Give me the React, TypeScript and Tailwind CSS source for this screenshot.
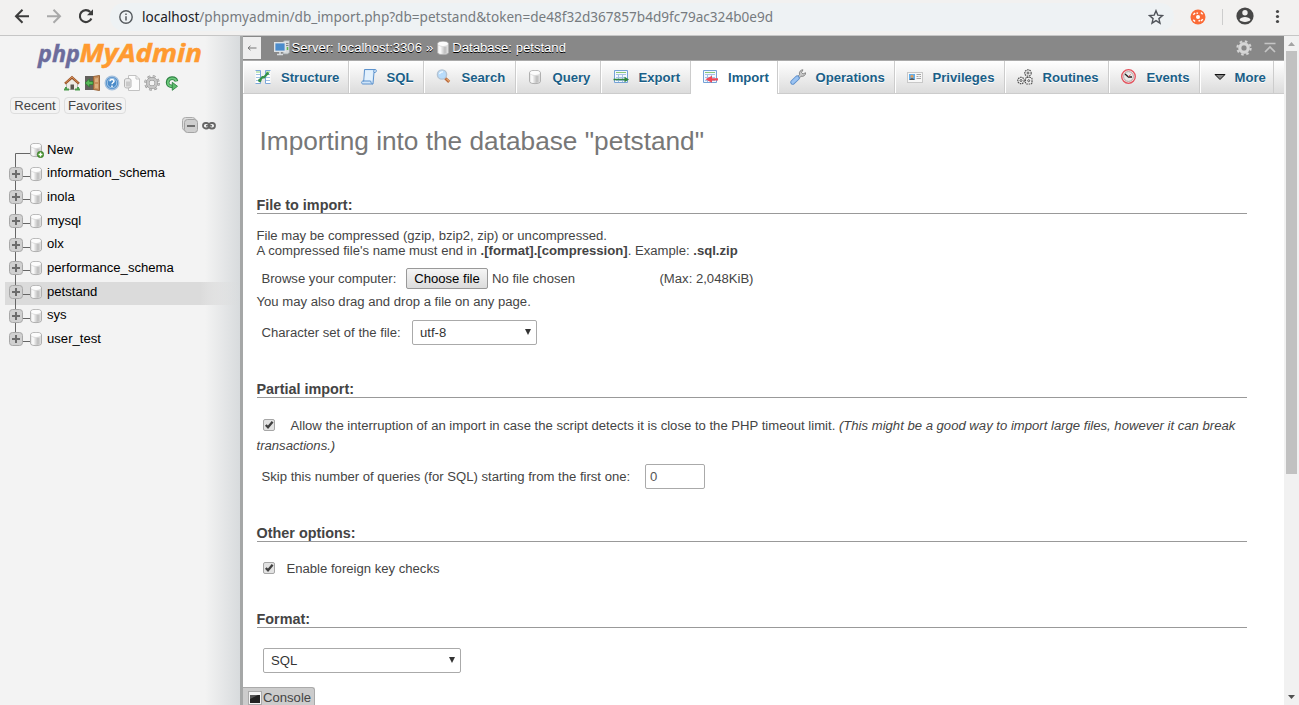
import type { ReactNode } from "react";

const tree = [
  { name: "New", cls: "h-[24px]", lh: "leading-[19px]" },
  { name: "information_schema", cls: "h-[23px]", lh: "leading-[17px]" },
  { name: "inola", cls: "h-[24px]", lh: "leading-[19px]" },
  { name: "mysql", cls: "h-[24px]", lh: "leading-[19px]" },
  { name: "olx", cls: "h-[23px]", lh: "leading-[17px]" },
  { name: "performance_schema", cls: "h-[24px]", lh: "leading-[19px]" },
  { name: "petstand", cls: "h-[24px]", lh: "leading-[19px]" },
  { name: "sys", cls: "h-[23px]", lh: "leading-[17px]" },
  { name: "user_test", cls: "h-[24px]", lh: "leading-[19px]" },
];

function Cylinder({ plus = false, className = "" }: { plus?: boolean; className?: string }) {
  return (
    <svg width="16" height="16" viewBox="0 0 16 16" className={"shrink-0 " + className}>
      <path d="M2.500 3.500C2.500 .8 13.500 .8 13.500 3.500V12.500C13.500 15.300 2.500 15.300 2.500 12.500Z" fill="#dcdcdc" stroke="#b0b0b0" />
      <path d="M3.500 5.500C5 6.500 6 6.700 6.500 6.700V14C5 14 3.500 13 3.500 12.500Z" fill="#f8f8f8" />
      <path d="M8.500 6.700H11.500V13.300L8.500 13.900Z" fill="#c2c2c2" />
      <ellipse cx="8" cy="3.800" rx="4.900" ry="2.100" fill="#fcfcfc" />
      {plus && (
        <g>
          <circle cx="12.500" cy="12.500" r="3.200" fill="#4c9a32" stroke="#2f6d1e" strokeWidth=".6" />
          <path d="M12.500 10.600v3.800M10.600 12.500h3.800" stroke="#fff" strokeWidth="1.300" />
        </g>
      )}
    </svg>
  );
}

function Branch({ first, last }: { first: boolean; last: boolean }) {
  return (
    <svg width="25" height="24" viewBox="0 0 25 24" className="shrink-0 overflow-visible">
      {first ? (
        <path d="M25 13.500H10.500V25" fill="none" stroke="#666" />
      ) : (
        <g>
          <path d={last ? "M10.500 0V8" : "M10.500 0V24"} stroke="#666" />
          <path d="M17 12.500H25" stroke="#666" />
          <rect x="4.500" y="3.500" width="13" height="13" rx="3" fill="#d0d0d0" stroke="#a8a8a8" />
          <path d="M11 6v8M7 10h8" stroke="#6c6c6c" strokeWidth="2" />
        </g>
      )}
    </svg>
  );
}

function Gear({ body = "#c6c6c6", edge = "#8b8b8b", hole = "#f3f3f3" }) {
  return (
    <svg width="16" height="16" viewBox="0 0 16 16" className="shrink-0">
      <circle cx="8" cy="8" r="6.300" fill="none" stroke={edge} strokeWidth="3" strokeDasharray="2.500 2.448" />
      <circle cx="8" cy="8" r="6.100" fill="none" stroke={body} strokeWidth="2.400" strokeDasharray="2 2.791" strokeDashoffset="-.25" />
      <circle cx="8" cy="8" r="4.200" fill="none" stroke={edge} strokeWidth="3.400" />
      <circle cx="8" cy="8" r="4.200" fill="none" stroke={body} strokeWidth="2.600" />
      <circle cx="8" cy="8" r="2.100" fill={hole} />
    </svg>
  );
}

function Svg16({ children }: { children: ReactNode }) {
  return (
    <svg width="16" height="16" viewBox="0 0 16 16" className="shrink-0" fill="none">
      {children}
    </svg>
  );
}

const StructureIcon = (
  <Svg16>
    <path d="M.5 1.500h5v13h-5M15.500 1.500h-5v13h5" fill="#fff" stroke="#7ba7da" />
    <path d="M1 5.500h4M1 8.500h4M1 11.500h4M11 5.500h4M11 8.500h4M11 11.500h4" stroke="#9fc0e4" />
    <path d="M1 3h4M11 3h4" stroke="#8ccf78" />
    <path d="M4.500 11.500L7.500 8L9 8.500L12.500 4.500" stroke="#34924a" strokeWidth="2.200" strokeLinejoin="round" />
    <circle cx="4.800" cy="11.500" r="1.700" fill="#34924a" />
    <circle cx="12.500" cy="4.500" r="1.500" fill="#34924a" />
  </Svg16>
);
const SqlIcon = (
  <Svg16>
    <path d="M3.500 .5H14.500C15.800 .5 15.500 3.500 14 3.500H13L12 15H2C0 15 .3 12 2 12H2.800Z" fill="#cfe4f8" stroke="#5c92cd" />
    <path d="M4.300 1.500H12L11.200 11.500H3.500Z" fill="#e3f1fd" />
    <path d="M2 12H9.500C10 13 10 14.500 11.500 15M13 3.500C12.500 2.500 12.500 1.500 13.500 .8" stroke="#5c92cd" />
  </Svg16>
);
const SearchIcon = (
  <Svg16>
    <path d="M9 9L13.200 12.800" stroke="#b9683a" strokeWidth="3" />
    <path d="M10.500 9.800L13.500 12.500" stroke="#e5a46c" strokeWidth="1.300" />
    <circle cx="6" cy="5.500" r="4.600" fill="#b8dcfb" stroke="#b3c3d3" strokeWidth="1.400" />
    <path d="M3.500 5A3 3 0 0 1 7 3" stroke="#f2faff" strokeWidth="1.300" />
  </Svg16>
);
function SheetIcon({ kind }: { kind: "export" | "import" }) {
  return (
    <Svg16>
      <path d="M1.500 1.500h13v12h-13z" fill="#f3f8ff" stroke="#75a2d6" />
      <path d="M3 3.500h10" stroke="#8bc878" />
      <path d="M3 5.500h10M3 8.500h10M3 11.500h10M5.500 5v8M9.500 5v8" stroke="#a6c2e6" />
      {kind === "export" ? (
        <path d="M.5 9.700h11V7.800L16 10.500l-4.500 2.700v-1.900H.5z" fill="#2f8540" />
      ) : (
        <path d="M16 9.300h-6V6.800L3.500 10.300l6.500 3.500v-2.200h6z" fill="#f04858" />
      )}
    </Svg16>
  );
}
const WrenchIcon = (
  <Svg16>
    <path d="M7 8.500L9.500 5.500C8.800 3 10.500 .8 13 .8L11.500 3.500L13 5L15.600 3.700C16 6 13.500 8 11 7.200L8.500 10Z" fill="#c8c8c8" stroke="#777" strokeWidth=".8" />
    <path d="M2.800 13.200L7.200 9" stroke="#5c8fcb" strokeWidth="5" strokeLinecap="round" />
    <path d="M2.800 13.200L7.200 9" stroke="#9bc3f2" strokeWidth="3.200" strokeLinecap="round" />
  </Svg16>
);
const PrivIcon = (
  <Svg16>
    <rect x=".5" y="3.500" width="15" height="10" fill="#f7f7f7" stroke="#c8c8c8" />
    <rect x="2" y="5" width="6" height="6" fill="#62aeea" />
    <circle cx="5" cy="7.200" r="1.500" fill="#e2a05f" />
    <path d="M2.500 11c.5-2.300 4.500-2.300 5 0z" fill="#555" />
    <path d="M9.500 5.500h4.500M9.500 7.500h2M12.500 7.500h1.500M9.500 9.500h4.500" stroke="#a5a5a5" />
  </Svg16>
);
const RoutinesIcon = (
  <Svg16>
    <g fill="#f1f1f1" stroke="#555" strokeWidth="1.200" strokeDasharray="1.600 .7">
      <circle cx="11" cy="4" r="3.200" />
      <circle cx="4" cy="11.500" r="3.200" />
      <rect x="8.500" y="8.500" width="6.500" height="6.500" rx="1.500" />
    </g>
    <g fill="#fff" stroke="#555">
      <circle cx="11" cy="4" r="1" />
      <circle cx="4" cy="11.500" r="1" />
      <circle cx="11.700" cy="11.700" r="1" />
    </g>
  </Svg16>
);
const EventsIcon = (
  <Svg16>
    <circle cx="7.500" cy="7.500" r="6.800" fill="#f2e4e2" stroke="#e3525d" strokeWidth="1.300" />
    <circle cx="7.500" cy="7.500" r="4.900" fill="#e9e9e9" stroke="#b0a0a0" strokeWidth=".9" />
    <path d="M4 5L7.500 8H11" stroke="#222" strokeWidth="1.300" />
    <path d="M7.500 8L9.500 5.500" stroke="#e14b57" />
  </Svg16>
);
const MoreIcon = (
  <Svg16>
    <path d="M3 5.500H13L8 10.500Z" fill="#888" stroke="#111" strokeWidth="1" />
  </Svg16>
);

const tabs = [
  { label: "Structure", icon: StructureIcon, w: "w-[106px]", gap: "ml-[10px]" },
  { label: "SQL", icon: SqlIcon, w: "w-[75px]", gap: "ml-[10px]" },
  { label: "Search", icon: SearchIcon, w: "w-[92px]", gap: "ml-[10px]" },
  { label: "Query", icon: <Cylinder className="-ml-px" />, w: "w-[85px]", gap: "ml-[10px]" },
  { label: "Export", icon: <SheetIcon kind="export" />, w: "w-[90px]", gap: "ml-[10px]" },
  { label: "Import", icon: <SheetIcon kind="import" />, w: "w-[87px]", gap: "ml-[10px]" },
  { label: "Operations", icon: WrenchIcon, w: "w-[117px]", gap: "ml-[10px]" },
  { label: "Privileges", icon: PrivIcon, w: "w-[110px]", gap: "ml-[10px]" },
  { label: "Routines", icon: RoutinesIcon, w: "w-[104px]", gap: "ml-[10px]" },
  { label: "Events", icon: EventsIcon, w: "w-[91px]", gap: "ml-[10px]" },
  { label: "More", icon: MoreIcon, w: "w-[74px]", gap: "ml-[7px]" },
];

function BrowserBar() {
  return (
    <header className="flex h-9 shrink-0 items-start border-b border-[#c6c6c6] bg-[#f2f1f0]">
      <svg width="110" height="34" viewBox="0 0 110 34" fill="none" className="shrink-0">
        <path d="M29 16.200H16.500M22.500 9.700L16 16.200L22.500 22.700" stroke="#3c3c3c" strokeWidth="2" />
        <path d="M47 16.200H59.500M53.500 9.700L60 16.200L53.500 22.700" stroke="#a9a9a9" strokeWidth="2" />
        <path d="M91.400 18.500A6 6 0 1 1 90.300 12" stroke="#3c3c3c" strokeWidth="2.100" />
        <path d="M93 9.200V15.200H87Z" fill="#3c3c3c" />
      </svg>
      <div className="mt-[3px] flex h-[28px] w-[1064px] items-center rounded-full bg-[#eef2f4] pl-[9px] pr-[10px]">
        <svg width="14" height="14" viewBox="0 0 14 14" fill="none" className="shrink-0">
          <circle cx="7" cy="7" r="6.200" stroke="#555a5e" strokeWidth="1.400" />
          <path d="M7 6.200V10.500M7 3.500V5" stroke="#555a5e" strokeWidth="1.500" />
        </svg>
        <div className="ml-[9px] flex-1">
          <svg width="640" height="28" viewBox="0 0 640 28" className="block overflow-visible">
            <text x="0" y="18.500" textLength="631" lengthAdjust="spacingAndGlyphs" className="fill-[#767b7f] font-['Noto_Sans',sans-serif] text-[14.500px]">
              <tspan className="fill-[#202124]">localhost</tspan>/phpmyadmin/db_import.php?db=petstand&amp;token=de48f32d367857b4d9fc79ac324b0e9d
            </text>
          </svg>
        </div>
        <svg width="16" height="16" viewBox="0 0 16 16" fill="none" className="shrink-0">
          <path d="M8 1.700L9.800 6.100L14.500 6.500L10.900 9.600L12 14.200L8 11.700L4 14.200L5.100 9.600L1.500 6.500L6.200 6.100Z" stroke="#50545a" strokeWidth="1.400" />
        </svg>
      </div>
      <svg width="125" height="34" viewBox="0 0 125 34" fill="none" className="shrink-0">
        <circle cx="24" cy="17" r="7.500" fill="#fb6b37" />
        <circle cx="24" cy="17" r="2" fill="#fff" />
        <path d="M19.300 14.800l1.800-1.900M26.900 12.500l1.800 1.800M28.800 19.200l-1.900 1.900M21.100 21.500l-1.800-1.800M22.500 12.800l1.500.6M24.500 21l1.500-.5" stroke="#fff" strokeWidth="1.400" />
        <path d="M48.500 9V25" stroke="#cdcdcd" />
        <circle cx="71" cy="16" r="8.600" fill="#474747" />
        <circle cx="71" cy="12.700" r="2.700" fill="#f2f1f0" />
        <path d="M65.500 19.800C67 16 75 16 76.500 19.800C75 22.600 67 22.600 65.500 19.800Z" fill="#f2f1f0" />
        <g fill="#474747">
          <circle cx="103.500" cy="11.500" r="1.600" />
          <circle cx="103.500" cy="16.500" r="1.600" />
          <circle cx="103.500" cy="21.500" r="1.600" />
        </g>
      </svg>
    </header>
  );
}

function Sidebar() {
  return (
    <aside className="flex w-[240px] shrink-0 flex-col bg-[linear-gradient(to_right,#f3f3f3_0px,#f3f3f3_205px,#d8dbdd_240px)]">
      <svg width="240" height="36" viewBox="0 0 240 36" className="shrink-0 overflow-visible">
        <text x="38" y="26" textLength="42" lengthAdjust="spacingAndGlyphs" className="fill-[#6c6c9c] stroke-[#6c6c9c] stroke-[.4px] font-['Open_Sans',sans-serif] text-[23.500px] font-bold italic">php</text>
        <text x="79.500" y="26" textLength="122.500" lengthAdjust="spacingAndGlyphs" className="fill-[#ff9a30] stroke-[#ff9a30] stroke-[.5px] font-['Open_Sans',sans-serif] text-[25.500px] font-bold italic">MyAdmin</text>
      </svg>
      <div className="flex h-[22px] items-center gap-1 pl-[64px]">
        <Svg16>
          <path d="M2.500 8V14.500H13.500V8L8 3.500Z" fill="#eeeae4" stroke="#aaa" strokeWidth=".8" />
          <path d="M6.500 14.500V9.500h3.500v5" fill="#5c5650" />
          <path d="M1 8.700L8 2.300L15 8.700" stroke="#9b5428" strokeWidth="2.400" />
          <path d="M1.500 8L8 2L14.500 8" stroke="#d59058" />
          <path d="M0 14.500h5M11 14.500h5M2 12v2M14 12v2" stroke="#4b9b4d" strokeWidth="2" />
        </Svg16>
        <Svg16>
          <path d="M1 1h9v14H1z" fill="#62605c" />
          <path d="M9.500 1.500L15.500 .5V15.500L9.500 14.500Z" fill="#c78e5c" stroke="#99653a" />
          <path d="M11 3.500l3-.5v4h-3zM11 9h3v4.500l-3-.5z" fill="#dcb080" />
          <path d="M1 8L5.500 4V6.500H9V9.500H5.500V12Z" fill="#59ba58" stroke="#2d7d35" strokeWidth=".8" />
        </Svg16>
        <Svg16>
          <circle cx="8" cy="8" r="6.800" fill="#4a8bc9" stroke="#a2bfdd" strokeWidth="1.400" />
          <circle cx="8" cy="8" r="4.800" stroke="#cfe2f3" strokeWidth=".7" />
          <path d="M6 6.300C6 3.800 10 4 10 6.200C10 7.500 8 7.600 8 9.300M8 10.600V12" stroke="#fff" strokeWidth="1.500" />
        </Svg16>
        <Svg16>
          <path d="M4.500 .5H12L15.500 4V15.500H4.500Z" fill="#fcfcfc" stroke="#c2c2c2" />
          <path d="M12 .5V4H15.500" stroke="#c2c2c2" />
          <path d="M.5 5C.5 3 7 3 7 5V11.500C7 13.500 .5 13.500 .5 11.500Z" fill="#e9e9e9" stroke="#b3b3b3" />
          <path d="M3 6.500V11.500M5 6.500V11.500" stroke="#aaa" />
        </Svg16>
        <Gear />
        <Svg16>
          <path d="M12.500 6.300C11.500 2 4 1.800 3.600 7.500C3.600 10 5.500 11.500 8.500 11.500" stroke="#2f8244" strokeWidth="3.600" />
          <path d="M12.300 5.800C11 2.500 4.200 2.300 3.800 7.500C3.800 9.800 5.800 11.300 8.500 11.300" stroke="#6cc97b" strokeWidth="1.800" />
          <path d="M8.300 7.300L13.500 11.300L8.300 15.300Z" fill="#5dbd6d" stroke="#2f8244" strokeWidth=".9" />
        </Svg16>
      </div>
      <div className="mt-[3px] flex gap-1 pl-[10px] text-[13.120px] leading-[15px] text-[#444]">
        <span className="flex h-[17px] w-[50px] items-center justify-center rounded-[4px] border border-[#ddd]">Recent</span>
        <span className="flex h-[17px] w-[62px] items-center justify-center rounded-[4px] border border-[#ddd]">Favorites</span>
      </div>
      <div className="mb-[3px] flex h-[23px] items-center gap-[3px] pl-[182px]">
        <svg width="17" height="17" viewBox="0 0 17 17" fill="none">
          <rect x=".5" y=".5" width="13" height="13" rx="3" fill="#ddd" stroke="#aaa" />
          <rect x="2.500" y="2.500" width="13" height="13" rx="3" fill="#cfcfcf" stroke="#a4a4a4" />
          <path d="M5 9H13" stroke="#666" strokeWidth="1.800" />
        </svg>
        <svg width="14" height="10" viewBox="0 0 14 10" fill="none" stroke="#666">
          <rect x="1" y="2" width="6" height="5.500" rx="2.700" strokeWidth="1.800" />
          <rect x="7" y="2" width="6" height="5.500" rx="2.700" strokeWidth="1.800" />
          <path d="M4 4.800H10" strokeWidth="1.500" />
        </svg>
      </div>
      <ul className="pl-[5px] text-[13.120px] text-black">
        {tree.map((t, i) => (
          <li key={t.name} className={t.cls}>
            <div className={"flex h-[23px] items-start " + (t.name === "petstand" ? "bg-[linear-gradient(to_right,#dbdbdb_195px,transparent_235px)]" : "")}>
              <Branch first={i === 0} last={i === tree.length - 1} />
              <Cylinder plus={i === 0} className="-ml-[2px] mt-[2px]" />
              <span className={"ml-[3px] " + t.lh}>{t.name}</span>
            </div>
          </li>
        ))}
      </ul>
    </aside>
  );
}

function Check() {
  return (
    <svg width="13" height="13" viewBox="0 0 13 13" fill="none" className="inline-block shrink-0 align-[-2px]" role="checkbox" aria-checked="true">
      <rect x=".5" y=".5" width="11" height="11" rx="1.500" fill="#e2e2e2" stroke="#a6a6a6" />
      <path d="M2.800 6L5 8.300L9.600 2.800" stroke="#404040" strokeWidth="2.300" />
    </svg>
  );
}

function Legend({ children, className }: { children: ReactNode; className: string }) {
  return <h3 className={"h-5 border-b border-[#999] text-[14.400px] font-bold leading-[22px] text-[#444] " + className}>{children}</h3>;
}

function SelectBox({ value, className }: { value: string; className: string }) {
  return (
    <div className={"flex h-[25px] items-center justify-between rounded-[2px] border border-[#aaa] bg-white pl-[7px] pr-[5px] text-[#333] " + className}>
      <span>{value}</span>
      <svg width="6" height="6" viewBox="0 0 6 6" className="mb-[2px]">
        <path d="M0 0H6L3 6Z" fill="#333" />
      </svg>
    </div>
  );
}

export default function App() {
  return (
    <div className="flex h-[705px] w-[1299px] flex-col overflow-hidden bg-white font-['Liberation_Sans',Arial,sans-serif] text-[13.120px] text-[#444]">
      <BrowserBar />
      <div className="flex min-h-0 flex-1">
        <Sidebar />
        <div className="w-[3px] shrink-0 bg-[#a5a7a7]" />
        <main className="relative flex w-[1041px] shrink-0 flex-col">
          <div className="flex h-[25px] shrink-0 items-center border-b border-[#aaa] bg-[#888] text-white [text-shadow:0_1px_0_#000]">
            <span className="flex h-[22px] w-[18px] items-center justify-center bg-[#eee] text-[#555] [text-shadow:none]">
              <svg width="10" height="6" viewBox="0 0 10 6" fill="none" stroke="#777"><path d="M9.500 3H1M3.500 .8L1 3L3.500 5.200" /></svg>
            </span>
            <svg width="16" height="16" viewBox="0 0 16 16" fill="none" className="ml-[13px] shrink-0">
              <path d="M9 1.500l2-1h4.500v12l-2 1.500H9z" fill="#d5d8da" stroke="#9da3a7" strokeWidth=".8" />
              <path d="M12 3.500h2.500M12 5.500h2.500" stroke="#888" />
              <path d="M13.500 7v3" stroke="#60b84c" strokeWidth="1.500" />
              <rect x=".7" y="2.700" width="10.600" height="8.600" fill="#4b8ccc" stroke="#dde2e5" strokeWidth="1.400" />
              <path d="M6 12v2M3 14.500h6" stroke="#d8dcdf" strokeWidth="1.600" />
            </svg>
            <span className="ml-[1.500px]">Server: localhost:3306</span>
            <span className="ml-[4px]">»</span>
            <Cylinder className="ml-[2px]" />
            <span className="ml-[1px]">Database: petstand</span>
            <span className="ml-auto"><Gear body="#d6d6d6" edge="#bbb" hole="#888" /></span>
            <svg width="12" height="12" viewBox="0 0 12 12" fill="none" className="ml-[12px] mr-[8px]">
              <path d="M.5 1.500H11.500M1 10L6 5L11 10" stroke="#c5c5c5" strokeWidth="1.700" />
            </svg>
          </div>
          <nav className="flex h-[33px] shrink-0 border-b border-[#ccc] bg-[linear-gradient(#fff,#dcdcdc)]">
            {tabs.map((t) => (
              <div
                key={t.label}
                className={
                  "flex shrink-0 items-center border-l border-r border-l-white border-r-[#ccc] text-[13.120px] font-bold text-[#1a5f88] [text-shadow:0_1px_0_#fff] " +
                  t.w +
                  (t.label === "Import" ? " h-[33px] bg-white pl-[10px] pb-px" : t.label === "Structure" ? " pl-[11px]" : " pl-[10.500px]")
                }
              >
                {t.icon}
                <span className={"pt-[2px] " + t.gap}>{t.label}</span>
              </div>
            ))}
          </nav>
          <div className="flex flex-col pl-[13.500px] pr-[37px]">
            <h2 className="mt-[32px] h-[30px] pl-[3px] text-[26.240px] leading-[30px] text-[#777]">Importing into the database "petstand"</h2>
            <Legend className="mt-[38px]">File to import:</Legend>
            <p className="mb-px mt-[14px] leading-[15px]">
              File may be compressed (gzip, bzip2, zip) or uncompressed.
              <br />
              A compressed file's name must end in <b>.[format].[compression]</b>. Example: <b>.sql.zip</b>
            </p>
            <div className="mt-[9px] flex h-[21px] items-center pl-[5px]">
              <span className="w-[144.500px]">Browse your computer:</span>
              <button className="h-[21px] w-[82px] whitespace-nowrap rounded-[2px] border border-[#999] bg-[linear-gradient(#f5f5f5,#dcdcdc)] text-black">Choose file</button>
              <span className="ml-[4px] w-[167.500px]">No file chosen</span>
              <span>(Max: 2,048KiB)</span>
            </div>
            <p className="mt-[5px] leading-[15px]">You may also drag and drop a file on any page.</p>
            <div className="mt-[11px] flex items-center pl-[5px]">
              <span className="w-[150.500px]">Character set of the file:</span>
              <SelectBox value="utf-8" className="w-[125px]" />
            </div>
            <Legend className="mt-[33px]">Partial import:</Legend>
            <p className="mt-[18px] h-[40px] whitespace-nowrap pl-0 leading-[20px]">
              <span className="ml-[6.500px] mr-[14.500px]"><Check /></span>
              Allow the interruption of an import in case the script detects it is close to the PHP timeout limit.{" "}
              <i>
                (This might be a good way to import large files, however it can break
                <br />
                transactions.)
              </i>
            </p>
            <div className="mt-[8px] flex items-center pl-[5px]">
              <span className="w-[383.500px]">Skip this number of queries (for SQL) starting from the first one:</span>
              <div className="flex h-[25px] w-[60px] items-center rounded-[2px] border border-[#aaa] pl-[4px] text-[#555]">0</div>
            </div>
            <Legend className="mt-[33px]">Other options:</Legend>
            <div className="mt-[16px] flex h-5 items-center pl-[6.500px]">
              <Check />
              <span className="ml-[10.500px] pt-[2px]">Enable foreign key checks</span>
            </div>
            <Legend className="mt-[30px]">Format:</Legend>
            <SelectBox value="SQL" className="ml-[6.500px] mt-5 w-[198px]" />
          </div>
          <div className="absolute bottom-0 left-0 flex h-[18px] w-[72px] items-center rounded-tr-[3px] border-r border-t border-[#aaa] bg-[#ccc] pl-[5px] pt-[2px]">
            <svg width="14" height="14" viewBox="0 0 14 14" className="shrink-0">
              <rect x=".5" y=".5" width="13" height="13" fill="#f4f4f4" stroke="#aaa" />
              <path d="M2 4H12V12H2Z" fill="#222" />
              <path d="M2 4H10L2 8Z" fill="#555" />
            </svg>
            <span className="ml-[1px]">Console</span>
          </div>
        </main>
        <div className="flex w-[15px] shrink-0 flex-col items-center bg-[#f1f1f1]">
          <svg width="15" height="15" viewBox="0 0 15 15" className="shrink-0"><path d="M4 10H11L7.500 6Z" fill="#a3a3a3" /></svg>
          <div className="h-[423px] w-[11px] bg-[#c1c1c1]" />
          <svg width="15" height="15" viewBox="0 0 15 15" className="mt-auto shrink-0"><path d="M4 5H11L7.500 9Z" fill="#505050" /></svg>
        </div>
      </div>
    </div>
  );
}
